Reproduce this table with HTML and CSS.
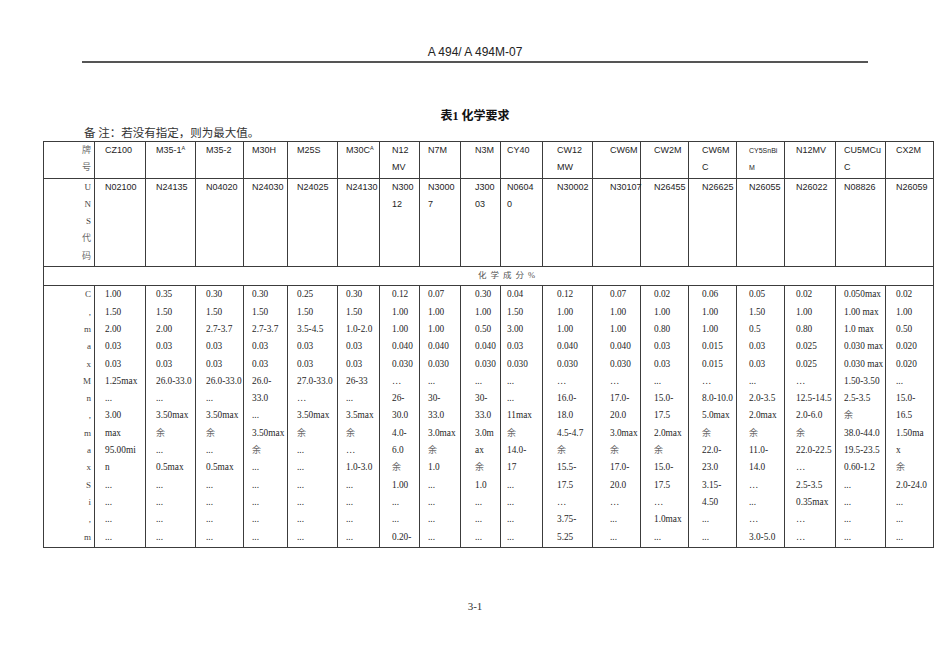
FILE: index.html
```html
<!DOCTYPE html>
<html lang="zh-CN">
<head>
<meta charset="utf-8">
<title>A 494/ A 494M-07 表1 化学要求</title>
<link rel="stylesheet" href="styles.css">
</head>
<body>
<div class="page">
  <header class="running-head">A 494/ A 494M-07</header>
  <div class="head-rule"></div>
  <h1 class="title">表1 化学要求</h1>
  <p class="note">备 注：若没有指定，则为最大值。</p>
  <table class="chem">
    <colgroup>
      <col><col><col><col><col><col><col><col><col><col>
      <col><col><col><col><col><col><col><col><col>
    </colgroup>
    <tr class="grid hdr">
      <td class="lab"><span class="cj">牌<br>号</span></td>
      <td>CZ100</td>
      <td>M35-1<sup class="sup">A</sup></td>
      <td>M35-2</td>
      <td>M30H</td>
      <td>M25S</td>
      <td>M30C<sup class="sup">A</sup></td>
      <td>N12<br>MV</td>
      <td>N7M</td>
      <td>N3M</td>
      <td>CY40</td>
      <td>CW12<br>MW</td>
      <td>CW6M</td>
      <td>CW2M</td>
      <td>CW6M<br>C</td>
      <td><span class="sm">CY5SnBi<br>M</span></td>
      <td>N12MV</td>
      <td>CU5MCu<br>C</td>
      <td>CX2M</td>
    </tr>
    <tr class="grid hdr">
      <td class="lab">U<br>N<br>S<br><span class="cj">代<br>码</span></td>
      <td>N02100</td>
      <td>N24135</td>
      <td>N04020</td>
      <td>N24030</td>
      <td>N24025</td>
      <td>N24130</td>
      <td>N300<br>12</td>
      <td>N3000<br>7</td>
      <td>J300<br>03</td>
      <td>N0604<br>0</td>
      <td>N30002</td>
      <td>N30107</td>
      <td>N26455</td>
      <td>N26625</td>
      <td>N26055</td>
      <td>N26022</td>
      <td>N08826</td>
      <td>N26059</td>
    </tr>
    <tr>
      <td colspan="19" class="chemhead">化学成分%</td>
    </tr>
    <tr class="grid data">
      <td class="lab">C<br>,<br>m<br>a<br>x<br>M<br>n<br>,<br>m<br>a<br>x<br>S<br>i<br>,<br>m</td>
      <td>1.00<br>1.50<br>2.00<br>0.03<br>0.03<br>1.25max<br>...<br>3.00<br>max<br>95.00mi<br>n<br>...<br>...<br>...<br>...</td>
      <td>0.35<br>1.50<br>2.00<br>0.03<br>0.03<br>26.0-33.0<br>...<br>3.50max<br><span class="cj">余</span><br>...<br>0.5max<br>...<br>...<br>...<br>...</td>
      <td>0.30<br>1.50<br>2.7-3.7<br>0.03<br>0.03<br>26.0-33.0<br>...<br>3.50max<br><span class="cj">余</span><br>...<br>0.5max<br>...<br>...<br>...<br>...</td>
      <td>0.30<br>1.50<br>2.7-3.7<br>0.03<br>0.03<br>26.0-<br>33.0<br>...<br>3.50max<br><span class="cj">余</span><br>...<br>...<br>...<br>...<br>...</td>
      <td>0.25<br>1.50<br>3.5-4.5<br>0.03<br>0.03<br>27.0-33.0<br>…<br>3.50max<br><span class="cj">余</span><br>...<br>...<br>...<br>...<br>...<br>...</td>
      <td>0.30<br>1.50<br>1.0-2.0<br>0.03<br>0.03<br>26-33<br>...<br>3.5max<br><span class="cj">余</span><br>…<br>1.0-3.0<br>...<br>...<br>...<br>...</td>
      <td>0.12<br>1.00<br>1.00<br>0.040<br>0.030<br>…<br>26-<br>30.0<br>4.0-<br>6.0<br><span class="cj">余</span><br>1.00<br>...<br>...<br>0.20-</td>
      <td>0.07<br>1.00<br>1.00<br>0.040<br>0.030<br>...<br>30-<br>33.0<br>3.0max<br><span class="cj">余</span><br>1.0<br>...<br>...<br>...<br>...</td>
      <td>0.30<br>1.00<br>0.50<br>0.040<br>0.030<br>...<br>30-<br>33.0<br>3.0m<br>ax<br><span class="cj">余</span><br>1.0<br>...<br>...<br>...</td>
      <td>0.04<br>1.50<br>3.00<br>0.03<br>0.030<br>...<br>...<br>11max<br><span class="cj">余</span><br>14.0-<br>17<br>...<br>...<br>...<br>...</td>
      <td>0.12<br>1.00<br>1.00<br>0.040<br>0.030<br>…<br>16.0-<br>18.0<br>4.5-4.7<br><span class="cj">余</span><br>15.5-<br>17.5<br>…<br>3.75-<br>5.25</td>
      <td>0.07<br>1.00<br>1.00<br>0.040<br>0.030<br>…<br>17.0-<br>20.0<br>3.0max<br><span class="cj">余</span><br>17.0-<br>20.0<br>…<br>...<br>...</td>
      <td>0.02<br>1.00<br>0.80<br>0.03<br>0.03<br>...<br>15.0-<br>17.5<br>2.0max<br><span class="cj">余</span><br>15.0-<br>17.5<br>…<br>1.0max<br>...</td>
      <td>0.06<br>1.00<br>1.00<br>0.015<br>0.015<br>…<br>8.0-10.0<br>5.0max<br><span class="cj">余</span><br>22.0-<br>23.0<br>3.15-<br>4.50<br>...<br>...</td>
      <td>0.05<br>1.50<br>0.5<br>0.03<br>0.03<br>...<br>2.0-3.5<br>2.0max<br><span class="cj">余</span><br>11.0-<br>14.0<br>…<br>...<br>…<br>3.0-5.0</td>
      <td>0.02<br>1.00<br>0.80<br>0.025<br>0.025<br>…<br>12.5-14.5<br>2.0-6.0<br><span class="cj">余</span><br>22.0-22.5<br>…<br>2.5-3.5<br>0.35max<br>…<br>…</td>
      <td>0.050max<br>1.00 max<br>1.0 max<br>0.030 max<br>0.030 max<br>1.50-3.50<br>2.5-3.5<br><span class="cj">余</span><br>38.0-44.0<br>19.5-23.5<br>0.60-1.2<br>...<br>...<br>...<br>...</td>
      <td>0.02<br>1.00<br>0.50<br>0.020<br>0.020<br>...<br>15.0-<br>16.5<br>1.50ma<br>x<br><span class="cj">余</span><br>2.0-24.0<br>...<br>...<br>...</td>
    </tr>
  </table>
  <footer class="folio">3-1</footer>
</div>
</body>
</html>
```

FILE: styles.css
```css
html, body {
  margin: 0;
  padding: 0;
  background: #ffffff;
}

.page {
  width: 950px;
  color: #1a1a1a;
  font-family: "Liberation Serif", "Noto Sans CJK SC", serif;
}

.running-head {
  padding-top: 45px;
  height: 14px;
  line-height: 14px;
  text-align: center;
  font-family: "Liberation Sans", "Noto Sans CJK SC", sans-serif;
  font-size: 12px;
  color: #222;
}

.head-rule {
  margin: 2px 82px 0 82px;
  border-top: 2px solid #555;
}

.title {
  margin: 45px 0 0 0;
  height: 16px;
  line-height: 16px;
  text-align: center;
  font-family: "Liberation Serif", "Noto Sans CJK SC", serif;
  font-size: 12px;
  font-weight: bold;
  color: #111;
}

.note {
  margin: 1px 0 0 84px;
  height: 16px;
  line-height: 16px;
  font-family: "Liberation Serif", "Noto Sans CJK SC", serif;
  font-size: 11.5px;
  color: #333;
}

.chem {
  margin-left: 43px;
  width: 890px;
  border-collapse: collapse;
  table-layout: fixed;
}

.chem col:nth-child(1) { width: 51px; }
.chem col:nth-child(2) { width: 51px; }
.chem col:nth-child(3) { width: 50px; }
.chem col:nth-child(4) { width: 48px; }
.chem col:nth-child(5) { width: 44px; }
.chem col:nth-child(6) { width: 50px; }
.chem col:nth-child(7) { width: 42px; }
.chem col:nth-child(8) { width: 40px; }
.chem col:nth-child(9) { width: 41px; }
.chem col:nth-child(10) { width: 40px; }
.chem col:nth-child(11) { width: 42px; }
.chem col:nth-child(12) { width: 50px; }
.chem col:nth-child(13) { width: 48px; }
.chem col:nth-child(14) { width: 48px; }
.chem col:nth-child(15) { width: 48px; }
.chem col:nth-child(16) { width: 48px; }
.chem col:nth-child(17) { width: 51px; }
.chem col:nth-child(18) { width: 50px; }
.chem col:nth-child(19) { width: 48px; }

.chem td {
  border: 1px solid #3c3c3c;
  vertical-align: top;
  padding: 0 0 1px 0;
  line-height: 17.3px;
  white-space: nowrap;
  color: #1e1e1e;
}

.grid td:nth-child(2) { padding-left: 10px; }
.grid td:nth-child(3) { padding-left: 10px; }
.grid td:nth-child(4) { padding-left: 10px; }
.grid td:nth-child(5) { padding-left: 8px; }
.grid td:nth-child(6) { padding-left: 9px; }
.grid td:nth-child(7) { padding-left: 8px; }
.grid td:nth-child(8) { padding-left: 12px; }
.grid td:nth-child(9) { padding-left: 8px; }
.grid td:nth-child(10) { padding-left: 14px; }
.grid td:nth-child(11) { padding-left: 6px; }
.grid td:nth-child(12) { padding-left: 14px; }
.grid td:nth-child(13) { padding-left: 17px; }
.grid td:nth-child(14) { padding-left: 13px; }
.grid td:nth-child(15) { padding-left: 13px; }
.grid td:nth-child(16) { padding-left: 12px; }
.grid td:nth-child(17) { padding-left: 11px; }
.grid td:nth-child(18) { padding-left: 8px; }
.grid td:nth-child(19) { padding-left: 10px; }

.hdr td {
  font-family: "Liberation Sans", "Noto Sans CJK SC", sans-serif;
  font-size: 9px;
}

.data td {
  font-family: "Liberation Serif", "Noto Sans CJK SC", serif;
  font-size: 9.3px;
}

.chem td.lab {
  text-align: right;
  padding-left: 0;
  padding-right: 3px;
  font-family: "Liberation Serif", "Noto Sans CJK SC", serif;
  font-size: 9px;
  color: #444;
}

.cj {
  color: #6a6a6a;
  font-size: 9px;
}

.sm {
  font-size: 7px;
}

.sup {
  font-size: 5.5px;
  line-height: 0;
  vertical-align: 3px;
}

.chem td.chemhead {
  padding-left: 434px;
  font-family: "Liberation Serif", "Noto Sans CJK SC", serif;
  font-size: 8.5px;
  letter-spacing: 4px;
  color: #555;
}

.folio {
  margin-top: 51px;
  height: 14px;
  line-height: 14px;
  text-align: center;
  font-family: "Liberation Serif", serif;
  font-size: 11px;
  color: #333;
}
```
